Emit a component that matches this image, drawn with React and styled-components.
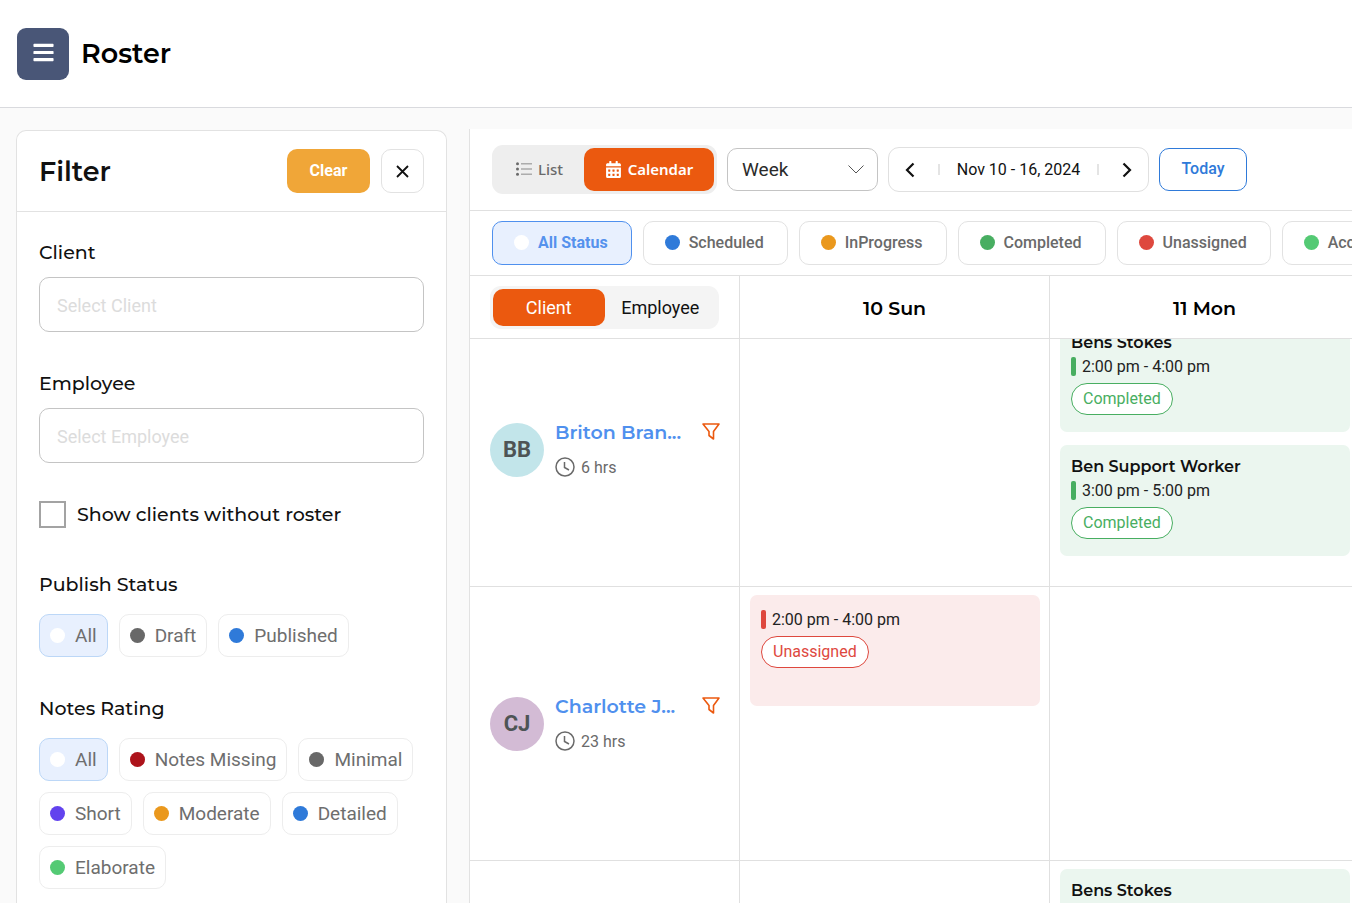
import React, { useLayoutEffect, useRef } from 'react';
import styled, { createGlobalStyle, css } from 'styled-components';
import { FaBars, FaCalendarAlt } from 'react-icons/fa';

const heading = '"Montserrat", "Inter", sans-serif';
const body = '"Roboto", sans-serif';
const compact = '"Noto Sans", sans-serif';

const GlobalStyle = createGlobalStyle`
  * {
    box-sizing: border-box;
  }

  body {
    margin: 0;
    background: #fafafa;
    color: #111;
    font-family: ${body};
    font-size: 16px;
  }

  button, input, select {
    margin: 0;
    font-family: inherit;
  }

  button {
    padding: 0;
    border: none;
    background: none;
    cursor: pointer;
  }
`;

const Page = styled.div`
  display: flex;
  flex-direction: column;
  height: 100vh;
  overflow: hidden;
`;

const Header = styled.header`
  display: flex;
  flex: none;
  align-items: center;
  gap: 12px;
  height: 108px;
  padding: 0 17px;
  background: #fff;
  border-bottom: 1px solid #d9dade;
`;

const MenuButton = styled.button`
  display: flex;
  align-items: center;
  justify-content: center;
  width: 52px;
  height: 52px;
  padding-bottom: 2px;
  border-radius: 9px;
  background: #495677;
  color: #fff;
  font-size: 23px;
`;

const PageTitle = styled.h1`
  margin: 0;
  color: #000;
  font-family: ${heading};
  font-size: 27px;
  font-weight: 600;
`;

const Main = styled.main`
  display: flex;
  flex: 1;
  min-height: 0;
  gap: 22px;
  padding: 21px 0 0 16px;
`;

const Sidebar = styled.aside`
  flex: none;
  width: 431px;
  margin-top: 1px;
  border: 1px solid #e2e2e2;
  border-bottom: none;
  border-radius: 10px 10px 0 0;
  background: #fff;
  overflow: hidden;
`;

const SidebarHeader = styled.div`
  display: flex;
  align-items: center;
  gap: 11px;
  height: 81px;
  padding: 0 22px;
  border-bottom: 1px solid #e2e2e2;
`;

const SidebarTitle = styled.h2`
  flex: 1;
  margin: 0;
  font-family: ${heading};
  font-size: 27px;
  font-weight: 600;
`;

const ClearButton = styled.button`
  width: 83px;
  height: 44px;
  padding-bottom: 2px;
  border-radius: 10px;
  background: #f0a638;
  color: #fff;
  font-size: 16px;
  font-weight: 700;
`;

const CloseButton = styled.button`
  display: flex;
  align-items: center;
  justify-content: center;
  width: 43px;
  height: 44px;
  border: 1px solid #e2e2e2;
  border-radius: 10px;
  background: #fff;
`;

const Filters = styled.div`
  padding: 27px 22px 0;
`;

const Field = styled.div`
  margin-bottom: 38px;
`;

const FieldLabel = styled.label`
  display: block;
  margin-bottom: 11px;
  font-family: ${heading};
  font-size: 19px;
  font-weight: 500;
  line-height: 27px;
`;

const TextInput = styled.input`
  display: block;
  width: 100%;
  height: 55px;
  padding: 2px 17px 0;
  border: 1px solid #c4c4c4;
  border-radius: 10px;
  background: #fff;
  font-size: 18px;

  &::placeholder {
    color: #dcdcdc;
    opacity: 1;
  }
`;

const CheckLabel = styled.label`
  display: flex;
  align-items: center;
  gap: 11px;
  margin-bottom: 44px;
  font-family: ${heading};
  font-size: 19px;
  font-weight: 500;
`;

const Checkbox = styled.input`
  appearance: none;
  width: 27px;
  height: 27px;
  border: 2px solid #a3a3a3;
  background: #fff;

  &:checked {
    background: #eb590f;
  }
`;

const Group = styled.section`
  margin-bottom: 39px;
`;

const GroupTitle = styled.h3`
  margin: 0 0 16px;
  font-family: ${heading};
  font-size: 19px;
  font-weight: 500;
  line-height: 26px;
`;

const Chips = styled.div`
  display: flex;
  flex-wrap: wrap;
  gap: 11px;
`;

const Chip = styled.button`
  display: flex;
  align-items: center;
  gap: 10px;
  height: 43px;
  padding: 0 10px;
  border: 1px solid ${({ $active }) => ($active ? '#bcd7f7' : '#ededed')};
  border-radius: 10px;
  background: ${({ $active }) => ($active ? '#e8f0fe' : '#fff')};
  color: #6e6e6e;
  font-size: 19px;
`;

const Dot = styled.span`
  flex: none;
  width: 15px;
  height: 15px;
  border-radius: 50%;
  background: ${({ $color }) => $color};
`;

const Roster = styled.section`
  display: flex;
  flex: 1;
  flex-direction: column;
  min-width: 0;
  border-left: 1px solid #e2e2e2;
  background: #fff;
`;

const Toolbar = styled.div`
  display: flex;
  flex: none;
  align-items: center;
  gap: 10px;
  height: 82px;
  padding: 0 22px;
  border-bottom: 1px solid #e0e0e0;
`;

const Toggle = styled.div`
  display: flex;
  flex: none;
  padding: 3px;
  border-radius: 11px;
  background: ${({ $light }) => ($light ? '#f4f4f4' : '#eee')};
`;

const ViewButton = styled.button`
  display: flex;
  align-items: center;
  justify-content: center;
  gap: 6px;
  width: ${({ $active }) => ($active ? 130 : 89)}px;
  height: 43px;
  padding-bottom: 1px;
  border-radius: 10px;
  background: ${({ $active }) => ($active ? '#eb590f' : 'none')};
  color: ${({ $active }) => ($active ? '#fff' : '#6a6a6a')};
  font-family: ${compact};
  font-size: 15px;
  font-weight: ${({ $active }) => ($active ? 600 : 500)};
`;

const SelectWrap = styled.div`
  position: relative;
  flex: none;
`;

const RangeSelect = styled.select`
  appearance: none;
  display: block;
  width: 151px;
  height: 43px;
  padding: 0 14px;
  border: 1px solid #c4c4c4;
  border-radius: 10px;
  background: #fff;
  color: #2b2b2b;
  font-size: 19px;
`;

const SelectArrow = styled.svg`
  position: absolute;
  top: 17px;
  right: 14px;
  pointer-events: none;
`;

const DatePicker = styled.div`
  display: flex;
  flex: none;
  align-items: center;
  justify-content: space-between;
  width: 261px;
  height: 45px;
  border: 1px solid #e0e0e0;
  border-radius: 11px;
`;

const DateLabel = styled.span`
  padding: 0 10px;
`;

const ArrowButton = styled.button`
  display: flex;
  align-items: center;
  justify-content: center;
  width: 42px;
  height: 43px;
`;

const Divider = styled.span`
  width: 2px;
  height: 11px;
  background: #e4e4e4;
`;

const TodayButton = styled.button`
  flex: none;
  width: 88px;
  height: 43px;
  padding-bottom: 2px;
  border: 1px solid #2f7ad9;
  border-radius: 10px;
  color: #2f7ad9;
  font-size: 16px;
  font-weight: 500;
`;

const StatusBar = styled.div`
  display: flex;
  flex: none;
  gap: 11px;
  padding: 10px 22px;
  border-bottom: 1px solid #e0e0e0;
  overflow: hidden;
`;

const StatusChip = styled.button`
  display: flex;
  flex: none;
  align-items: center;
  gap: 9px;
  height: 44px;
  padding: 0 23px 1px 21px;
  border: 1px solid ${({ $active }) => ($active ? '#4f90ee' : '#e2e2e2')};
  border-radius: 10px;
  background: ${({ $active }) => ($active ? '#e8f0fe' : '#fff')};
  color: ${({ $active }) => ($active ? '#5592ed' : '#6a6a6a')};
  font-size: 16px;
  font-weight: ${({ $active }) => ($active ? 700 : 500)};
`;

const Scroller = styled.div`
  flex: 1;
  min-height: 0;
  overflow: auto;
  scrollbar-width: none;
`;

const Schedule = styled.table`
  width: 2440px;
  table-layout: fixed;
  border-collapse: separate;
  border-spacing: 0;
`;

const cellBorders = css`
  border-right: 1px solid #e0e0e0;
  border-bottom: 1px solid #e0e0e0;
`;

const HeadCell = styled.th`
  ${cellBorders}
  position: sticky;
  top: 0;
  width: ${({ $first }) => ($first ? 270 : 310)}px;
  height: 63px;
  padding: ${({ $first }) => ($first ? '0 20px' : '2px 20px 0')};
  background: #fff;
  color: #000;
  font-family: ${heading};
  font-size: 19px;
  font-weight: 600;
`;

const GroupButton = styled.button`
  width: 112px;
  height: 37px;
  border-radius: 10px;
  background: ${({ $active }) => ($active ? '#eb590f' : 'none')};
  color: ${({ $active }) => ($active ? '#fff' : '#111')};
  font-family: ${body};
  font-size: 18px;
`;

const ClientCell = styled.th`
  ${cellBorders}
  height: 274px;
  padding: 0 19px 0 20px;
  font-weight: 400;
  text-align: left;
`;

const DayCell = styled.td`
  ${cellBorders}
  height: 274px;
  padding: 8px 9px 0 10px;
  vertical-align: top;
`;

const Client = styled.div`
  display: flex;
  align-items: center;
  gap: 11px;
`;

const Avatar = styled.span`
  display: flex;
  flex: none;
  align-items: center;
  justify-content: center;
  width: 54px;
  height: 54px;
  border-radius: 50%;
  background: ${({ $color }) => $color};
  color: #4e5455;
  font-size: 22px;
  font-weight: 700;
`;

const ClientInfo = styled.div`
  flex: 1;
  min-width: 0;
`;

const ClientRow = styled.div`
  display: flex;
  align-items: center;
  justify-content: space-between;
  height: 35px;
`;

const ClientName = styled.a`
  color: #4f90ee;
  font-family: ${heading};
  font-size: 19px;
  font-weight: 600;
  text-decoration: none;
`;

const FilterButton = styled.button`
  display: flex;
  padding-bottom: 2px;
`;

const Hours = styled.div`
  display: flex;
  align-items: center;
  gap: 6px;
  height: 35px;
  color: #6a6a6a;
  font-size: 16px;
`;

const Shift = styled.article`
  height: 111px;
  margin-bottom: 13px;
  padding: 12px 11px;
  border-radius: 7px;
  background: ${({ $tone }) => $tone.background};
`;

const ShiftName = styled.h4`
  margin: 0 0 2px;
  font-family: ${heading};
  font-size: 16px;
  font-weight: 600;
  line-height: 19px;
`;

const ShiftTime = styled.div`
  display: flex;
  align-items: center;
  gap: 6px;
  height: 25px;
  margin-bottom: 4px;
  color: #222;

  &::before {
    content: '';
    width: 5px;
    height: 19px;
    border-radius: 2px;
    background: ${({ $tone }) => $tone.color};
  }
`;

const ShiftBadge = styled.span`
  display: inline-flex;
  align-items: center;
  height: 32px;
  padding: 0 11px 2px;
  border: 1px solid ${({ $tone }) => $tone.color};
  border-radius: 16px;
  background: #fff;
  color: ${({ $tone }) => $tone.color};
  font-size: 16px;
`;

const tones = {
  Completed: { color: '#48ae61', background: '#ebf6ef' },
  Unassigned: { color: '#de483e', background: '#fbebeb' },
};

const publishStatuses = [
  { label: 'All', color: '#fff', active: true },
  { label: 'Draft', color: '#686868' },
  { label: 'Published', color: '#2f7ad9' },
];

const notesRatings = [
  { label: 'All', color: '#fff', active: true },
  { label: 'Notes Missing', color: '#ad131b' },
  { label: 'Minimal', color: '#686868' },
  { label: 'Short', color: '#6243ee' },
  { label: 'Moderate', color: '#ea981d' },
  { label: 'Detailed', color: '#2f7ad9' },
  { label: 'Elaborate', color: '#54ca74' },
];

const statuses = [
  { label: 'All Status', color: '#fff', active: true },
  { label: 'Scheduled', color: '#2f7ad9' },
  { label: 'InProgress', color: '#ea981d' },
  { label: 'Completed', color: '#48ae61' },
  { label: 'Unassigned', color: '#de483e' },
  { label: 'Accepted', color: '#54ca74' },
];

const days = ['10 Sun', '11 Mon', '12 Tue', '13 Wed', '14 Thu', '15 Fri', '16 Sat'];

const rows = [
  {
    id: 1,
    client: { name: 'Briton Bran...', initials: 'BB', color: '#c2e5ea', hours: 6 },
    shifts: {
      '11 Mon': [
        { name: 'Bens Stokes', time: '2:00 pm - 4:00 pm', status: 'Completed' },
        { name: 'Ben Support Worker', time: '3:00 pm - 5:00 pm', status: 'Completed' },
      ],
    },
  },
  {
    id: 2,
    client: { name: 'Charlotte J...', initials: 'CJ', color: '#d3bbd5', hours: 23 },
    shifts: {
      '10 Sun': [{ time: '2:00 pm - 4:00 pm', status: 'Unassigned' }],
    },
  },
  {
    id: 3,
    shifts: {
      '11 Mon': [{ name: 'Bens Stokes', time: '2:00 pm - 4:00 pm', status: 'Completed' }],
    },
  },
];

function ListIcon() {
  return (
    <svg width="16" height="14" viewBox="0 0 16 14" fill="currentColor" aria-hidden="true">
      <circle cx="1.5" cy="1.8" r="1.5" />
      <circle cx="1.5" cy="7" r="1.5" />
      <circle cx="1.5" cy="12.200" r="1.5" />
      <path opacity="0.5" d="M5 1h11v1.600H5zM5 6.200h11v1.600H5zM5 11.400h11V13H5z" />
    </svg>
  );
}

function CloseIcon() {
  return (
    <svg width="13" height="13" viewBox="0 0 13 13" fill="none" stroke="#111" strokeWidth="1.8" aria-hidden="true">
      <path d="M1 1l11 11M12 1L1 12" />
    </svg>
  );
}

function Arrow({ d }) {
  return (
    <svg width="10" height="16" viewBox="0 0 10 16" fill="none" stroke="#111" strokeWidth="2.2" aria-hidden="true">
      <path d={d} />
    </svg>
  );
}

function ClockIcon() {
  return (
    <svg width="20" height="20" viewBox="0 0 20 20" fill="none" stroke="#6a6a6a" strokeWidth="1.5" aria-hidden="true">
      <circle cx="10" cy="10" r="9" />
      <path d="M9.500 5v5.500l4.500 2.500" />
    </svg>
  );
}

function FunnelIcon() {
  return (
    <svg width="18" height="17" viewBox="0 0 18 17" fill="none" stroke="#eb590f" strokeWidth="1.6" strokeLinejoin="round" aria-hidden="true">
      <path d="M1 1h16l-5.500 7.500V16L7 12.500v-4z" />
    </svg>
  );
}

function ChipGroup({ title, items }) {
  return (
    <Group>
      <GroupTitle>{title}</GroupTitle>
      <Chips>
        {items.map(({ label, color, active }) => (
          <Chip key={label} type="button" $active={active}>
            <Dot $color={color} />
            {label}
          </Chip>
        ))}
      </Chips>
    </Group>
  );
}

function ShiftCard({ shift }) {
  const tone = tones[shift.status];
  return (
    <Shift $tone={tone}>
      {shift.name && <ShiftName>{shift.name}</ShiftName>}
      <ShiftTime $tone={tone}>{shift.time}</ShiftTime>
      <ShiftBadge $tone={tone}>{shift.status}</ShiftBadge>
    </Shift>
  );
}

function ClientCard({ client }) {
  return (
    <Client>
      <Avatar $color={client.color}>{client.initials}</Avatar>
      <ClientInfo>
        <ClientRow>
          <ClientName href="#client">{client.name}</ClientName>
          <FilterButton type="button" aria-label="Filter client">
            <FunnelIcon />
          </FilterButton>
        </ClientRow>
        <Hours>
          <ClockIcon />
          {`${client.hours} hrs`}
        </Hours>
      </ClientInfo>
    </Client>
  );
}

function FilterPanel() {
  return (
    <Sidebar>
      <SidebarHeader>
        <SidebarTitle>Filter</SidebarTitle>
        <ClearButton type="button">Clear</ClearButton>
        <CloseButton type="button" aria-label="Close">
          <CloseIcon />
        </CloseButton>
      </SidebarHeader>
      <Filters>
        <Field>
          <FieldLabel htmlFor="client">Client</FieldLabel>
          <TextInput id="client" type="text" placeholder="Select Client" />
        </Field>
        <Field>
          <FieldLabel htmlFor="employee">Employee</FieldLabel>
          <TextInput id="employee" type="text" placeholder="Select Employee" />
        </Field>
        <CheckLabel>
          <Checkbox type="checkbox" />
          Show clients without roster
        </CheckLabel>
        <ChipGroup title="Publish Status" items={publishStatuses} />
        <ChipGroup title="Notes Rating" items={notesRatings} />
      </Filters>
    </Sidebar>
  );
}

function RosterTable() {
  const scroller = useRef(null);

  // open just past the top of the first row
  useLayoutEffect(() => {
    scroller.current.scrollTop = 26;
  }, []);

  return (
    <Scroller ref={scroller}>
      <Schedule>
        <thead>
          <tr>
            <HeadCell $first>
              <Toggle $light>
                <GroupButton type="button" $active>Client</GroupButton>
                <GroupButton type="button">Employee</GroupButton>
              </Toggle>
            </HeadCell>
            {days.map(day => <HeadCell key={day}>{day}</HeadCell>)}
          </tr>
        </thead>
        <tbody>
          {rows.map(row => (
            <tr key={row.id}>
              <ClientCell>
                {row.client && <ClientCard client={row.client} />}
              </ClientCell>
              {days.map(day => (
                <DayCell key={day}>
                  {(row.shifts[day] || []).map(shift => (
                    <ShiftCard key={shift.time} shift={shift} />
                  ))}
                </DayCell>
              ))}
            </tr>
          ))}
        </tbody>
      </Schedule>
    </Scroller>
  );
}

function App() {
  return (
    <Page>
      <GlobalStyle />
      <Header>
        <MenuButton type="button" aria-label="Menu">
          <FaBars />
        </MenuButton>
        <PageTitle>Roster</PageTitle>
      </Header>
      <Main>
        <FilterPanel />
        <Roster>
          <Toolbar>
            <Toggle>
              <ViewButton type="button">
                <ListIcon />
                List
              </ViewButton>
              <ViewButton type="button" $active>
                <FaCalendarAlt size={17} />
                Calendar
              </ViewButton>
            </Toggle>
            <SelectWrap>
              <RangeSelect aria-label="Range" defaultValue="Week">
                <option>Week</option>
              </RangeSelect>
              <SelectArrow width="16" height="9" viewBox="0 0 16 9" fill="none" stroke="#555">
                <path d="M0.5 0.5L8 8L15.5 0.5" />
              </SelectArrow>
            </SelectWrap>
            <DatePicker>
              <ArrowButton type="button" aria-label="Previous">
                <Arrow d="M8.5 1.5L2 8l6.5 6.5" />
              </ArrowButton>
              <Divider />
              <DateLabel>Nov 10 - 16, 2024</DateLabel>
              <Divider />
              <ArrowButton type="button" aria-label="Next">
                <Arrow d="M1.5 1.5L8 8l-6.5 6.5" />
              </ArrowButton>
            </DatePicker>
            <TodayButton type="button">Today</TodayButton>
          </Toolbar>
          <StatusBar>
            {statuses.map(({ label, color, active }) => (
              <StatusChip key={label} type="button" $active={active}>
                <Dot $color={color} />
                {label}
              </StatusChip>
            ))}
          </StatusBar>
          <RosterTable />
        </Roster>
      </Main>
    </Page>
  );
}

export default App;
